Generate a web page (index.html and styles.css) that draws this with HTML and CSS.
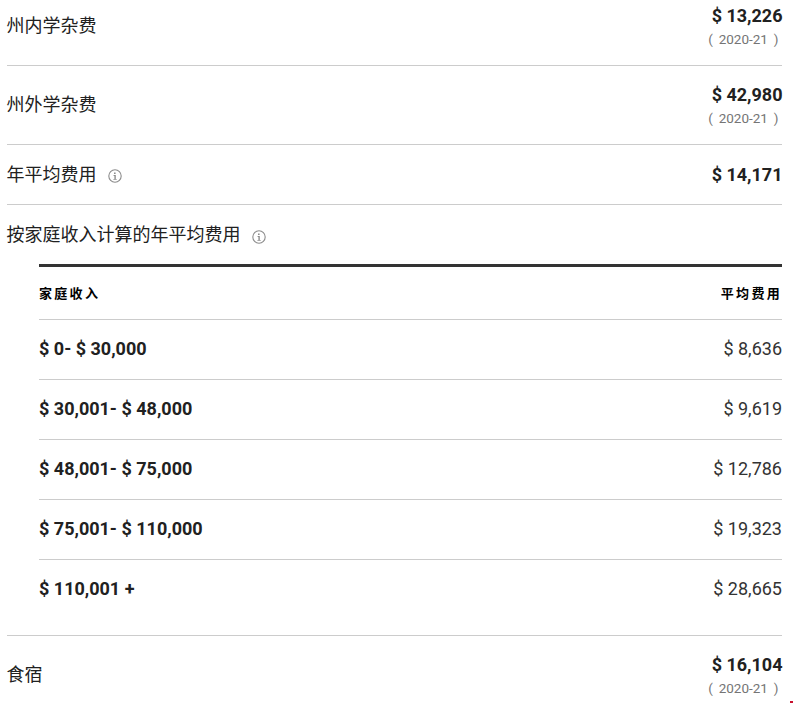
FILE: index.html
```html
<!DOCTYPE html>
<html lang="zh-CN">
<head>
<meta charset="utf-8">
<title>费用</title>
<link rel="stylesheet" href="styles.css">
</head>
<body>
<div class="list">
  <div class="row row-first">
    <div class="label">州内学杂费</div>
    <div class="value"><div class="amount">$ 13,226</div><div class="year">( 2020-21 )</div></div>
  </div>
  <div class="row row-tall">
    <div class="label">州外学杂费</div>
    <div class="value"><div class="amount">$ 42,980</div><div class="year">( 2020-21 )</div></div>
  </div>
  <div class="row row-short">
    <div class="label">年平均费用<svg class="info" viewBox="0 0 14 14" width="14" height="14"><circle cx="7" cy="7" r="6.2" fill="none" stroke="#8c8c8c" stroke-width="1.1"/><path d="M6 3.6h1.6v1.4H6zM5.6 6h2.2v3.9h.9v.9H5.4v-.9h1V6.9h-.8z" fill="#8c8c8c"/></svg></div>
    <div class="value"><div class="amount">$ 14,171</div></div>
  </div>
  <div class="section">
    <div class="label">按家庭收入计算的年平均费用<svg class="info" viewBox="0 0 14 14" width="14" height="14"><circle cx="7" cy="7" r="6.2" fill="none" stroke="#8c8c8c" stroke-width="1.1"/><path d="M6 3.6h1.6v1.4H6zM5.6 6h2.2v3.9h.9v.9H5.4v-.9h1V6.9h-.8z" fill="#8c8c8c"/></svg></div>
    <div class="table">
      <div class="thead"><span>家庭收入</span><span>平均费用</span></div>
      <div class="tr"><span class="range">$ 0- $ 30,000</span><span class="cost">$ 8,636</span></div>
      <div class="tr"><span class="range">$ 30,001- $ 48,000</span><span class="cost">$ 9,619</span></div>
      <div class="tr"><span class="range">$ 48,001- $ 75,000</span><span class="cost">$ 12,786</span></div>
      <div class="tr"><span class="range">$ 75,001- $ 110,000</span><span class="cost">$ 19,323</span></div>
      <div class="tr"><span class="range">$ 110,001 +</span><span class="cost">$ 28,665</span></div>
    </div>
  </div>
  <div class="row row-last">
    <div class="label">食宿</div>
    <div class="value"><div class="amount">$ 16,104</div><div class="year">( 2020-21 )</div></div>
  </div>
</div>
<div class="corner-mark"></div>
</body>
</html>
```
FILE: styles.css
```css
html, body { margin: 0; padding: 0; background: #fff; }
body {
  position: relative;
  height: 703px;
  overflow: hidden;
  font-family: Roboto, "Noto Sans CJK SC", sans-serif;
  color: #212121;
}
.list { margin: 0 11px 0 7px; }
.row {
  display: flex;
  justify-content: space-between;
  border-bottom: 1px solid #ccc;
  box-sizing: border-box;
}
.row-first { height: 66px; padding-top: 5px; }
.row-tall { height: 79px; padding-top: 18px; }
.row-short { height: 60px; align-items: center; }
.row-last { border-bottom: 0; padding-top: 18px; height: 70px; }
.label {
  font-size: 18px;
  line-height: 32px;
  color: #212121;
  display: flex;
  align-items: center;
  margin-left: -0.5px;
}
.row-first .label, .row-tall .label, .row-last .label { align-self: flex-start; margin-top: 5px; }
.info { margin-left: 11.5px; margin-top: 3px; }
.value { text-align: right; margin-right: -0.5px; }
.amount { font-size: 18px; font-weight: 700; line-height: 22px; color: #212121; }
.year {
  font-size: 13.5px;
  line-height: 20px;
  margin-top: 2px;
  margin-right: 4px;
  word-spacing: 2.5px;
  color: #757575;
}
.section { padding-top: 14px; border-bottom: 1px solid #ccc; height: 431px; box-sizing: border-box; }
.table { margin-left: 32px; margin-top: 13px; border-top: 3px solid #333; }
.thead {
  display: flex;
  justify-content: space-between;
  align-items: center;
  height: 50px;
  padding-bottom: 2px;
  border-bottom: 1px solid #ccc;
  font-size: 13px;
  font-weight: 700;
  letter-spacing: 2.3px;
  color: #000;
}
.tr {
  display: flex;
  justify-content: space-between;
  align-items: center;
  height: 57px;
  padding-bottom: 2px;
  border-bottom: 1px solid #ccc;
  font-size: 18px;
}
.tr:last-child { border-bottom: 0; }
.range { font-weight: 700; }
.cost { color: #333; }
.corner-mark {
  position: absolute;
  right: 0;
  bottom: 0;
  width: 3px;
  height: 2px;
  background: #c8102e;
}
```
